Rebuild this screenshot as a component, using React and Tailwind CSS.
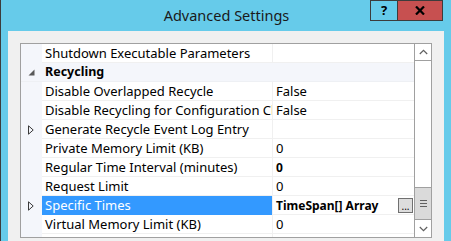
import React from 'react'

const rows = [
  { name: 'Shutdown Executable Parameters', value: '' },
  { category: 'Recycling' },
  { name: 'Disable Overlapped Recycle', value: 'False' },
  { name: 'Disable Recycling for Configuration Changes', value: 'False' },
  { name: 'Generate Recycle Event Log Entry', value: '', expand: true },
  { name: 'Private Memory Limit (KB)', value: '0' },
  { name: 'Regular Time Interval (minutes)', value: '0', bold: true },
  { name: 'Request Limit', value: '0' },
  { name: 'Specific Times', value: 'TimeSpan[] Array', bold: true, selected: true, expand: true, ellipsis: true },
  { name: 'Virtual Memory Limit (KB)', value: '0' },
  { name: '', value: '' },
]

function ExpandArrow() {
  return (
    <svg width="6" height="10" viewBox="0 0 6 10" className="block">
      <path d="M0.5 0.8 L5.2 5 L0.5 9.2 Z" fill="none" stroke="#3a3a3a" strokeWidth="1" />
    </svg>
  )
}

function CollapseArrow() {
  return (
    <svg width="7" height="7" viewBox="0 0 7 7" className="block">
      <path d="M6.5 0.5 L6.5 6.5 L0.5 6.5 Z" fill="#595959" />
    </svg>
  )
}

function Row({ row }) {
  if (row.category) {
    return (
      <div className="h-[19px] flex items-center bg-[#f4f6fb] border-b border-[#eef0f4]">
        <div className="w-[21px] flex justify-end pr-[7px]">
          <CollapseArrow />
        </div>
        <span className="pl-[3px] pt-[1px] font-bold text-[12.5px]">{row.category}</span>
      </div>
    )
  }
  return (
    <div className="h-[19px] flex">
      <div className="w-[21px] shrink-0 bg-[#f4f6fb] flex items-center justify-end pr-[8px]">
        {row.expand && <ExpandArrow />}
      </div>
      <div
        className={`w-[230px] shrink-0 pl-[3px] pt-[1px] flex items-center overflow-hidden whitespace-nowrap border-b ${
          row.selected ? 'bg-[#3399ff] text-white border-[#3399ff]' : 'bg-white border-[#f0f0f0]'
        }`}
      >
        {row.name}
      </div>
      <div className="w-px shrink-0 bg-[#f0f0f0]" />
      <div className="flex-1 pl-[3px] flex items-center bg-white border-b border-[#f0f0f0] whitespace-nowrap">
        <span className={`flex-1 pt-[1px] ${row.bold ? 'font-bold text-[12px]' : ''}`}>{row.value}</span>
        {row.ellipsis && (
          <div className="w-[15px] h-[15px] mr-[1px] border border-[#707070] bg-[#dddddd] flex items-end justify-center text-[10px] leading-[10px] pb-[1px]">
            ...
          </div>
        )}
      </div>
    </div>
  )
}

export default function App() {
  return (
    <div className="w-[451px] h-[241px] overflow-hidden bg-[#66cbea] border-l border-[#3c3c3c] flex flex-col font-['Segoe_UI','Noto_Sans',sans-serif] text-black">
      {/* Title bar */}
      <div className="h-[31px] shrink-0 relative flex items-center justify-center">
        <span className="text-[14.5px] text-[#1a1a1a] pl-px">Advanced Settings</span>
        <div className="absolute top-0 right-[8px] flex">
          <div className="w-[28px] h-[21px] border border-[#3c3c3c] flex items-center justify-center text-[13px] font-bold leading-none">?</div>
          <div className="w-[45px] h-[21px] border border-l-0 border-[#3c3c3c] bg-[#c75050] flex items-center justify-center">
            <svg width="10" height="9" viewBox="0 0 10 9">
              <path d="M1 0.5 L9 8.5 M9 0.5 L1 8.5" stroke="#000" strokeWidth="2.2" />
            </svg>
          </div>
        </div>
      </div>

      {/* Client area */}
      <div className="flex-1 mx-[7px] bg-[#f0f0f0] pt-[12px] px-[12px]">
        <div className="h-[195px] border border-[#a0a0a0] flex text-[13px] leading-none">
          <div className="flex-1 overflow-hidden">
            {rows.map((row, i) => (
              <Row key={i} row={row} />
            ))}
          </div>
          {/* Scrollbar */}
          <div className="w-[17px] shrink-0 border-l border-[#a0a0a0] bg-white flex flex-col">
            <div className="h-[17px] border-b border-[#a0a0a0] flex items-center justify-center">
              <svg width="9" height="6" viewBox="0 0 9 6">
                <path d="M0.8 5 L4.5 1.3 L8.2 5" fill="none" stroke="#606060" strokeWidth="1.2" />
              </svg>
            </div>
            <div className="flex-1 flex flex-col justify-end">
              <div className="h-[33px] bg-[#dadada] border-t border-b border-[#a0a0a0] flex flex-col items-center justify-center gap-[2px]">
                <div className="w-[7px] h-px bg-[#606060]" />
                <div className="w-[7px] h-px bg-[#606060]" />
                <div className="w-[7px] h-px bg-[#606060]" />
              </div>
            </div>
            <div className="h-[17px] flex items-center justify-center">
              <svg width="9" height="6" viewBox="0 0 9 6">
                <path d="M0.8 1 L4.5 4.7 L8.2 1" fill="none" stroke="#606060" strokeWidth="1.2" />
              </svg>
            </div>
          </div>
        </div>
      </div>
    </div>
  )
}
